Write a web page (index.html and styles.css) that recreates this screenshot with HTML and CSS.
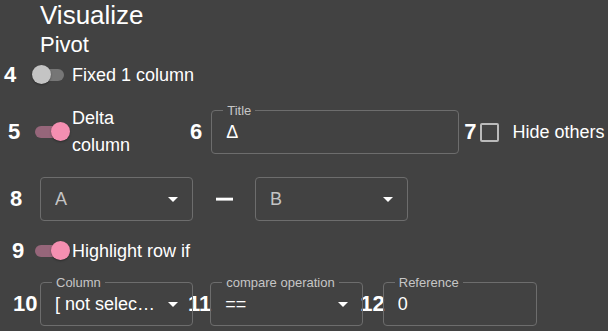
FILE: index.html
```html
<!doctype html>
<html>
	<head>
		<meta charset="utf-8"/>
		<meta name="viewport" content="width=device-width, initial-scale=1" />
		<title>Visualize</title>
		<link rel="stylesheet" href="styles.css">
	</head>
	<body>
		<div class="panel">
			<div class="title">Visualize</div>
			<div class="subtitle">Pivot</div>

			<!-- 4: fixed first column -->
			<div class="row row-short">
				<div class="lead"><span class="num pad-4">4</span></div>
				<span class="switch"><span class="track"></span><span class="thumb"></span></span>
				<span class="label">Fixed 1 column</span>
			</div>

			<!-- 5 / 6 / 7: delta column -->
			<div class="row row-tall">
				<div class="lead"><span class="num pad-5">5</span></div>
				<span class="switch on"><span class="track"></span><span class="thumb"></span></span>
				<span class="label label-wrap">Delta column</span>
				<span class="num num-6">6</span>
				<div class="field field-title">
					<span class="field-label">Title</span>
					<span class="value">Δ</span>
				</div>
				<span class="num num-7">7</span>
				<span class="check"></span>
				<span class="label label-check">Hide others</span>
			</div>

			<!-- 8: A minus B -->
			<div class="row row-field">
				<div class="lead wide"><span class="num pad-8">8</span></div>
				<div class="field select">
					<span class="value muted">A</span>
					<svg class="arrow" viewBox="0 0 24 24"><path d="M7 10l5 5 5-5z"/></svg>
				</div>
				<span class="minus">—</span>
				<div class="field select">
					<span class="value muted">B</span>
					<svg class="arrow" viewBox="0 0 24 24"><path d="M7 10l5 5 5-5z"/></svg>
				</div>
			</div>

			<!-- 9: highlight -->
			<div class="row row-short row-9">
				<div class="lead"><span class="num pad-9">9</span></div>
				<span class="switch on"><span class="track"></span><span class="thumb"></span></span>
				<span class="label">Highlight row if</span>
			</div>

			<!-- 10 / 11 / 12: condition -->
			<div class="row row-field row-10">
				<div class="lead wide"><span class="num pad-10">10</span></div>
				<div class="field select">
					<span class="field-label">Column</span>
					<span class="value cut">[ not selected ]</span>
					<svg class="arrow" viewBox="0 0 24 24"><path d="M7 10l5 5 5-5z"/></svg>
				</div>
				<span class="num num-11">11</span>
				<div class="field select">
					<span class="field-label">compare operation</span>
					<span class="value">==</span>
					<svg class="arrow" viewBox="0 0 24 24"><path d="M7 10l5 5 5-5z"/></svg>
				</div>
				<span class="num num-12">12</span>
				<div class="field field-ref">
					<span class="field-label">Reference</span>
					<span class="value">0</span>
				</div>
			</div>
		</div>
	</body>
</html>
```

FILE: styles.css
```css
body {
	margin: 0;
	background-color: #424242;
	color: #fff;
	font-family: "Liberation Sans", Arial, sans-serif;
}

.panel {
	display: flex;
	flex-direction: column;
}

.title {
	padding-left: 40px;
	font-size: 26px;
	line-height: 30px;
}

.subtitle {
	padding-left: 40px;
	font-size: 22px;
	line-height: 30px;
}

.row {
	display: flex;
	align-items: center;
}

.row-short {
	height: 30px;
}

.row-tall {
	height: 54px;
	margin-top: 15px;
}

.row-field {
	height: 44px;
	margin-top: 18px;
}

.row-9 {
	margin-top: 15px;
}

.row-10 {
	margin-top: 16px;
}

/* annotation numbers */
.lead {
	width: 32px;
	flex: none;
}

.lead.wide {
	width: 40px;
}

.num {
	font-size: 22px;
	font-weight: bold;
	flex: none;
}

.pad-4 { padding-left: 4px; }
.pad-5 { padding-left: 8px; }
.pad-8 { padding-left: 10px; }
.pad-9 { padding-left: 12px; }
.pad-10 { padding-left: 13px; }

.num-6 {
	margin-left: 18px;
	margin-right: 9px;
}

.num-7 {
	margin-left: 5px;
	margin-right: 3px;
}

.num-11 {
	margin-left: -5px;
	margin-right: -1px;
}

.num-12 {
	margin-left: -3px;
	margin-right: -2px;
}

.label {
	font-size: 18px;
	flex: none;
}

.label-wrap {
	width: 100px;
	line-height: 27px;
}

.label-check {
	margin-left: 14px;
}

/* switch */
.switch {
	position: relative;
	width: 40px;
	height: 20px;
	flex: none;
}

.switch .track {
	position: absolute;
	left: 2px;
	top: 4px;
	width: 30px;
	height: 12px;
	border-radius: 6px;
	background-color: #767676;
}

.switch .thumb {
	position: absolute;
	left: 0;
	top: 0;
	width: 19px;
	height: 19px;
	border-radius: 50%;
	background-color: #c4c4c4;
	box-shadow: 0 1px 2px rgba(0, 0, 0, 0.35);
}

.switch.on .track {
	left: 3px;
	background-color: #96667a;
}

.switch.on .thumb {
	left: 19px;
	background-color: #f48fb1;
}

/* outlined fields */
.field {
	position: relative;
	box-sizing: border-box;
	height: 44px;
	border: 1px solid #6d6d6d;
	border-radius: 4px;
	display: flex;
	align-items: center;
	padding: 0 7px 0 14px;
	font-size: 18px;
	flex: none;
}

.field-title {
	width: 248px;
}

.field-ref {
	width: 154px;
}

.select {
	width: 153px;
}

.field-label {
	position: absolute;
	top: -8px;
	left: 11px;
	padding: 0 4px;
	background-color: #424242;
	font-size: 13px;
	line-height: 15px;
	color: #c6c6c6;
}

.value {
	flex: 1;
	min-width: 0;
	white-space: nowrap;
	overflow: hidden;
	text-overflow: ellipsis;
}

.value.cut {
	margin-right: 4px;
}

.muted {
	color: #c4c4c4;
}

.arrow {
	width: 24px;
	height: 24px;
	flex: none;
	fill: #fff;
}

.minus {
	width: 17px;
	margin: 0 22px 0 23px;
	font-size: 17px;
	font-weight: bold;
	-webkit-text-stroke: 1.2px #fff;
	flex: none;
	overflow: hidden;
}

/* checkbox */
.check {
	box-sizing: border-box;
	width: 19px;
	height: 19px;
	border: 2px solid #bababa;
	border-radius: 2px;
	flex: none;
}
```
